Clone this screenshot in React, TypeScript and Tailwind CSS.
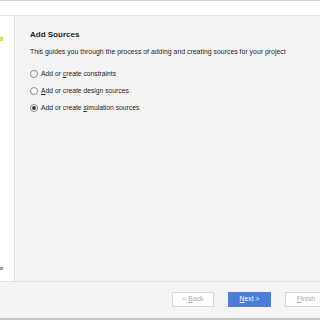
import React from "react";

type Choice = {
  before: string;
  key: string;
  after: string;
  checked?: boolean;
};

const choices: Choice[] = [
  { before: "Add or ", key: "c", after: "reate constraints" },
  { before: "", key: "A", after: "dd or create design sources" },
  { before: "Add or create ", key: "s", after: "imulation sources", checked: true },
];

function Radio({ checked }: { checked?: boolean }) {
  return (
    <span className="w-[8px] h-[8px] rounded-full border border-[#8a8a8a] bg-white flex items-center justify-center shrink-0">
      {checked && <span className="w-[4px] h-[4px] rounded-full bg-[#3c3c3c]" />}
    </span>
  );
}

function Button({
  label,
  primary,
  disabled,
}: {
  label: React.ReactNode;
  primary?: boolean;
  disabled?: boolean;
}) {
  return (
    <div
      className={
        primary
          ? "w-[43px] h-[15px] shrink-0 flex items-center justify-center bg-[#4d7bd8] text-white text-[6.8px]"
          : "w-[42px] h-[15px] shrink-0 flex items-center justify-center bg-white border border-[#d6d6d6] text-[6.8px] " +
            (disabled ? "text-[#a8a8a8]" : "text-[#333]")
      }
    >
      {label}
    </div>
  );
}

export default function App() {
  return (
    <div
      className="w-[320px] h-[320px] flex flex-col bg-[#f4f4f4] overflow-hidden"
      style={{ fontFamily: '"Liberation Sans", Arial, sans-serif' }}
    >
      {/* top edge of window above */}
      <div className="h-[1px] bg-[#cfcfcf] shrink-0" />
      <div className="h-[15px] bg-white border-b border-[#e2e2e2] shrink-0" />

      {/* body */}
      <div className="flex h-[266px] shrink-0 border-b border-[#e4e4e4]">
        <div className="w-[15px] bg-white border-r border-[#e6e6e6] flex flex-col shrink-0">
          <div className="mt-[21px] w-[3px] h-[4px] bg-[#d8e04a]" />
          <div className="mt-[226px] w-[3px] h-[3px] bg-[#a0a0a0]" />
        </div>
        <div className="flex-1 pl-[15px] pt-[14px] text-[#1e1e1e]">
          <div className="text-[8px] font-bold leading-[10px]">Add Sources</div>
          <div className="mt-[7px] text-[6.92px] leading-[9px] whitespace-nowrap">
            This guides you through the process of adding and creating sources for your project
          </div>
          <div className="mt-[14px] flex flex-col gap-[9px]">
            {choices.map((c) => (
              <div key={c.after} className="flex items-center gap-[3px] h-[8px]">
                <Radio checked={c.checked} />
                <span className="text-[6.75px] leading-[8px] whitespace-nowrap">
                  {c.before}
                  <span className="underline">{c.key}</span>
                  {c.after}
                </span>
              </div>
            ))}
          </div>
        </div>
      </div>

      {/* footer */}
      <div className="flex-1 flex items-start pt-[10px] pl-[172px] gap-[14px]">
        <Button
          disabled
          label={
            <>
              &lt;&nbsp;<span className="underline">B</span>ack
            </>
          }
        />
        <Button
          primary
          label={
            <>
              <span className="underline">N</span>ext&nbsp;&gt;
            </>
          }
        />
        <Button
          disabled
          label={
            <>
              <span className="underline">F</span>inish
            </>
          }
        />
      </div>
      <div className="h-[2px] bg-[#c4c4c4] shrink-0" />
    </div>
  );
}
